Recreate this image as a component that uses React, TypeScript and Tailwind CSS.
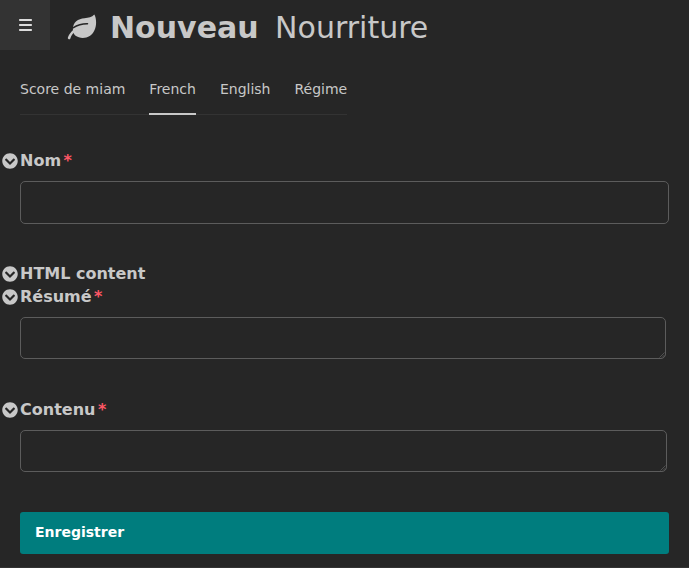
import { FaChevronCircleDown } from "react-icons/fa";

function FieldLabel({ text, required = false }: { text: string; required?: boolean }) {
  return (
    <div className="flex h-[23px] items-center pl-[2px]">
      <FaChevronCircleDown className="mr-[2px] size-4 shrink-0 text-[#c8c8c8]" />
      <h2 className="text-[16px] leading-[23px] font-bold">
        {text}
        {required && <span className="ml-[2.5px] text-[#fd5765]">*</span>}
      </h2>
    </div>
  );
}

function LeafIcon() {
  return (
    <svg className="mt-[13px] ml-[17px] shrink-0" width="30" height="28" viewBox="0 0 30 28" fill="none">
      <path
        d="M27.3 1.5C28.5 3.4 29.1 6.4 29.1 9.5C29.1 15.5 26.6 20.4 22.7 23C18.8 25.5 12.8 25.9 8.2 22.6C6.7 21.2 5.9 19 5.9 16.8C5.7 8.8 11.2 5.8 17.5 5.2C21.6 4.8 24.8 4.4 27.3 1.5Z"
        fill="#c8c8c8"
      />
      <path d="M20.5 10.7C15.5 10.6 10.5 12 6 14.8" stroke="#262626" strokeWidth="1.5" strokeLinecap="round" />
      <path d="M2.1 25C3.2 21.4 5.5 18.6 9.5 16" stroke="#c8c8c8" strokeWidth="2.6" strokeLinecap="round" />
    </svg>
  );
}

function ResizableField({ widthClass }: { widthClass: string }) {
  return (
    <div className={`relative mt-[9px] ml-[20px] h-[42px] ${widthClass}`}>
      <textarea className="block size-full resize-none overflow-hidden rounded-[5px] border border-[#5c5c5c] bg-transparent" />
      <svg className="pointer-events-none absolute right-[1px] bottom-[1px]" width="6" height="6" viewBox="0 0 6 6" stroke="#505050">
        <path d="M0.5 5.5L5.5 0.5M3 5.5L5.5 3" />
      </svg>
    </div>
  );
}

const tabs = ["Score de miam", "French", "English", "Régime"];

export default function App() {
  return (
    <div className="h-[568px] w-[689px] overflow-hidden border-b border-[#333333] bg-[#262626] font-['DejaVu_Sans',sans-serif] text-[#c8c8c8]">
      <header className="flex h-[50px]">
        <button className="flex size-[50px] items-center justify-center bg-[#333333] pl-px" aria-label="Menu">
          <svg width="13" height="12" viewBox="0 0 13 12" fill="#dddddd">
            <rect width="13" height="2" rx="0.8" />
            <rect y="5" width="13" height="2" rx="0.8" />
            <rect y="10" width="13" height="2" rx="0.8" />
          </svg>
        </button>
        <LeafIcon />
        <h1 className="ml-[13px] flex gap-[16.5px] pt-[8px] text-[30px] leading-[39px] whitespace-nowrap">
          <span className="font-bold">Nouveau</span>
          <span>Nourriture</span>
        </h1>
      </header>

      <nav className="mt-[20px] ml-[20px] flex h-[45px] w-[327px] gap-[24px] border-b border-[#333333] text-[14px] leading-[18px] whitespace-nowrap">
        {tabs.map((tab) => (
          <a
            key={tab}
            className={tab === "French" ? "h-[45px] border-b-2 border-[#c8c8c8] pt-[10px]" : "h-[45px] pt-[10px]"}
          >
            {tab}
          </a>
        ))}
      </nav>

      <form className="pt-[34px]">
        <FieldLabel text="Nom" required />
        <input className="mt-[9px] ml-[20px] block h-[43px] w-[649px] rounded-[5px] border border-[#5c5c5c] bg-transparent px-5" />
        <div className="mt-[38px]">
          <FieldLabel text="HTML content" />
          <FieldLabel text="Résumé" required />
        </div>
        <ResizableField widthClass="w-[646px]" />
        <div className="mt-[39px]">
          <FieldLabel text="Contenu" required />
        </div>
        <ResizableField widthClass="w-[647px]" />
        <button className="mt-[40px] ml-[20px] block h-[42px] w-[649px] rounded-[3px] bg-[#007d7e] px-[15px] pb-[2px] text-left text-[14px] font-bold text-white">
          Enregistrer
        </button>
      </form>
    </div>
  );
}
